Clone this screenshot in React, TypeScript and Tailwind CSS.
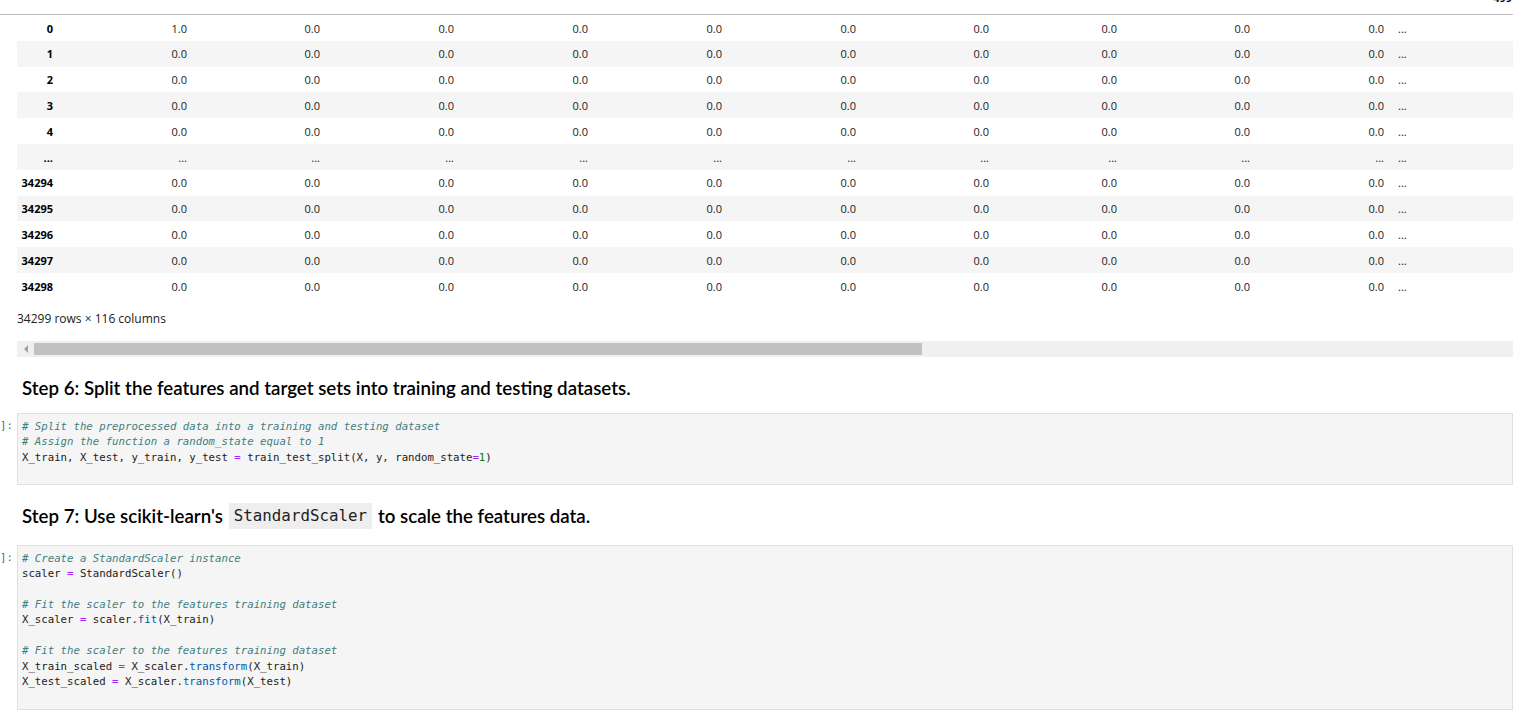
import { memo } from 'react';

const colWidths = [134, 133, 134, 134, 134, 134, 133, 128, 133, 134];
const topRows = ['0', '1', '2', '3', '4'];
const bottomRows = ['34294', '34295', '34296', '34297', '34298'];

const Cmt = ({ children }: { children: React.ReactNode }) => (
  <span className="italic text-[#408080]">{children}</span>
);
const Op = ({ children }: { children: React.ReactNode }) => <span className="text-[#aa22ff]">{children}</span>;
const Fn = ({ children }: { children: React.ReactNode }) => <span className="text-[#0055aa]">{children}</span>;
const Num = ({ children }: { children: React.ReactNode }) => <span className="text-[#008000]">{children}</span>;

const DataRow = ({ index, first, striped, dots }: { index: string; first?: boolean; striped: boolean; dots?: boolean }) => (
  <div className={`flex h-[25.8px] items-center pt-[2px] ${striped ? 'bg-[#f5f5f5]' : 'bg-white'}`}>
    <div className="w-[41px] shrink-0 pr-[5px] text-right font-bold text-black">{index}</div>
    {colWidths.map((w, i) => (
      <div key={i} style={{ width: w }} className="shrink-0 pr-[5px] text-right">
        {dots ? '...' : first && i === 0 ? '1.0' : '0.0'}
      </div>
    ))}
    <div className="w-[40px] shrink-0 pl-[9px]">...</div>
  </div>
);

const CodeCell = ({ children, height }: { children: React.ReactNode; height: string }) => (
  <div className="flex">
    <div className="w-[17px] shrink-0 pt-[5px] font-['DejaVu_Sans_Mono',monospace] text-[10.7px] leading-[15.4px] text-[#616161]">
      ]:
    </div>
    <div
      className={`flex-1 border border-[#e0e0e0] bg-[#f5f5f5] px-[4px] pt-[5px] font-['DejaVu_Sans_Mono',monospace] text-[10.7px] leading-[15.4px] whitespace-pre text-[#212121] ${height}`}
    >
      {children}
    </div>
  </div>
);

const App = () => {
  return (
    <div className="h-[727px] w-[1513px] overflow-hidden bg-white font-['Open_Sans',sans-serif] text-[#212121]">
      <div className="flex h-[15px] items-start justify-end overflow-hidden border-b border-[#bdbdbd] pl-[17px]">
        <span className="-mt-[9px] pr-[1px] text-[11px] leading-[14px] font-bold text-black">499</span>
      </div>
      <div className="ml-[17px] text-[11px] text-[#212121]">
        {topRows.map((r, i) => (
          <DataRow key={r} index={r} first={i === 0} striped={i % 2 === 1} />
        ))}
        <DataRow index="..." striped dots />
        {bottomRows.map((r, i) => (
          <DataRow key={r} index={r} striped={i % 2 === 1} />
        ))}
      </div>
      <div className="mt-[11px] ml-[17px] text-[12px] text-[#212121]">34299 rows × 116 columns</div>
      <div className="mt-[13px] ml-[17px] flex h-[16px] items-center bg-[#f0f0f0]">
        <div className="flex w-[17px] justify-center">
          <div className="h-0 w-0 border-y-[4px] border-r-[4px] border-y-transparent border-r-[#a3a3a3]" />
        </div>
        <div className="h-[12px] w-[888px] bg-[#c1c1c1]" />
      </div>
      <h2 className="mt-[17px] ml-[22px] font-['Lato',sans-serif] text-[18.7px] font-semibold text-black">
        Step 6: Split the features and target sets into training and testing datasets.
      </h2>
      <div className="mt-[11px]">
        <CodeCell height="h-[72px]">
          <Cmt># Split the preprocessed data into a training and testing dataset</Cmt>
          {'\n'}
          <Cmt># Assign the function a random_state equal to 1</Cmt>
          {'\n'}X_train, X_test, y_train, y_test <Op>=</Op> train_test_split(X, y, random_state<Op>=</Op>
          <Num>1</Num>)
        </CodeCell>
      </div>
      <h2 className="mt-[17px] ml-[22px] flex items-center font-['Lato',sans-serif] text-[18.7px] font-semibold text-black">
        Step 7: Use scikit-learn's
        <code className="mx-[6px] bg-[#eeeeee] px-[5px] py-[1px] font-['DejaVu_Sans_Mono',monospace] text-[15.8px] font-normal text-[#212121]">
          StandardScaler
        </code>
        to scale the features data.
      </h2>
      <div className="mt-[15px]">
        <CodeCell height="h-[165px]">
          <Cmt># Create a StandardScaler instance</Cmt>
          {'\n'}scaler <Op>=</Op> StandardScaler()
          {'\n\n'}
          <Cmt># Fit the scaler to the features training dataset</Cmt>
          {'\n'}X_scaler <Op>=</Op> scaler.<Fn>fit</Fn>(X_train)
          {'\n\n'}
          <Cmt># Fit the scaler to the features training dataset</Cmt>
          {'\n'}X_train_scaled <Op>=</Op> X_scaler.<Fn>transform</Fn>(X_train)
          {'\n'}X_test_scaled <Op>=</Op> X_scaler.<Fn>transform</Fn>(X_test)
        </CodeCell>
      </div>
    </div>
  );
};

export default memo(App);
